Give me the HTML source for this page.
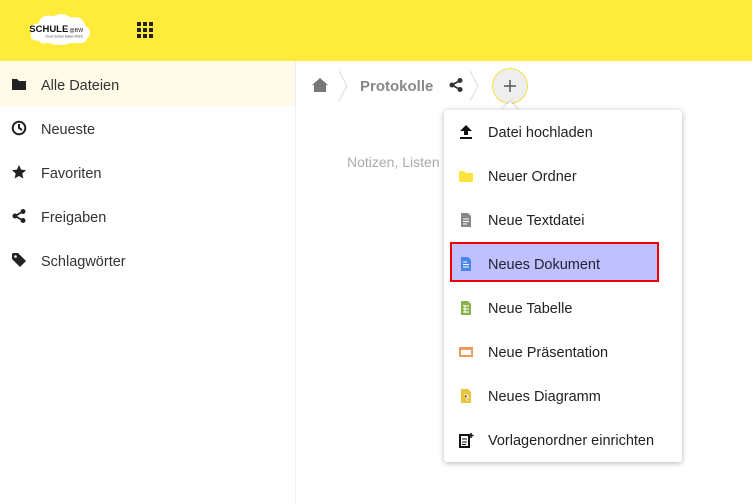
<!DOCTYPE html>
<html><head><style>
*{margin:0;padding:0;box-sizing:border-box}
body{width:752px;height:504px;overflow:hidden;background:#fff;font-family:"Liberation Sans","DejaVu Sans",sans-serif;color:#222;position:relative}
.hdr{position:absolute;left:0;top:0;width:752px;height:61px;background:#ffeb3b}
.side{position:absolute;left:0;top:61px;width:296px;height:443px;border-right:1px solid #eee}
.si{height:44px;display:flex;align-items:center;font-size:14.5px;color:#333;padding-top:3px}
.si svg{margin-left:11px;width:16px;height:16px;margin-right:14px;margin-top:-3px}
.si.act{background:#fffbe8}
.menu{position:absolute;left:444px;top:110px;width:238px;height:352px;background:#fff;border-radius:3px;box-shadow:0 1px 6px rgba(0,0,0,.3)}
.mi{height:44px;font-size:14.5px;color:#222;position:relative}
.mi svg{position:absolute;left:14px;top:14px;width:16px;height:16px}
.mi span{position:absolute;left:44px;top:15px}
.hl{position:absolute;left:6px;top:132px;width:209px;height:40px;background:#c0c0ff;border:2px solid #e00}
</style></head><body>
<div class="hdr">
 <svg style="position:absolute;left:26px;top:9px" width="72" height="38" viewBox="0 0 68 36"><path d="M12 30 Q2 30 5 22 Q2 14 12 14 Q14 4 26 7 Q34 2 42 8 Q54 6 56 16 Q64 20 58 28 Q56 34 44 32 Q30 36 20 32 Q14 34 12 30Z" fill="#fff"/><text x="3" y="22" font-size="9" font-weight="bold" fill="#111" font-family="Liberation Sans">SCHULE</text><text x="41" y="22" font-size="5" fill="#111">@BW</text><text x="18" y="27" font-size="3" fill="#555">Cloud Schule Baden-Württ.</text></svg>
 <svg style="position:absolute;left:137px;top:22px" width="16" height="16"><g fill="#222"><rect x="0" y="0" width="4" height="4"/><rect x="6" y="0" width="4" height="4"/><rect x="12" y="0" width="4" height="4"/><rect x="0" y="6" width="4" height="4"/><rect x="6" y="6" width="4" height="4"/><rect x="12" y="6" width="4" height="4"/><rect x="0" y="12" width="4" height="4"/><rect x="6" y="12" width="4" height="4"/><rect x="12" y="12" width="4" height="4"/></g></svg>
</div>
<div class="side">
 <div class="si act" style="margin-top:1px"><svg viewBox="0 0 16 16"><path d="M1 3h5l2 2h7v9H1z" fill="#222"/></svg>Alle Dateien</div>
 <div class="si"><svg viewBox="0 0 16 16"><circle cx="8" cy="8" r="6.3" fill="none" stroke="#222" stroke-width="2"/><path d="M8 4v4l3 2" fill="none" stroke="#222" stroke-width="2"/></svg>Neueste</div>
 <div class="si"><svg viewBox="0 0 16 16"><path d="M8 1l2.1 4.6 5 .5-3.8 3.4 1.1 5L8 12l-4.4 2.5 1.1-5L.9 6.1l5-.5z" fill="#222"/></svg>Favoriten</div>
 <div class="si"><svg viewBox="0 0 16 16"><circle cx="12" cy="3.5" r="2.5" fill="#222"/><circle cx="12" cy="12.5" r="2.5" fill="#222"/><circle cx="4" cy="8" r="2.5" fill="#222"/><path d="M12 3.5L4 8l8 4.5" stroke="#222" stroke-width="1.8" fill="none"/></svg>Freigaben</div>
 <div class="si"><svg viewBox="0 0 16 16"><path d="M1 2v5l8 8 6-6-8-8H2z" fill="#222"/><circle cx="4.5" cy="4.5" r="1.3" fill="#fff"/></svg>Schlagwörter</div>
</div>
<svg style="position:absolute;left:312px;top:78px" width="16" height="14" viewBox="0 0 16 14"><path d="M8 0L0 7h2v7h12V7h2z" fill="#777"/></svg>
<svg style="position:absolute;left:337px;top:70px" width="12" height="32"><path d="M2 1l8 15-8 15" fill="none" stroke="#ddd"/></svg>
<div style="position:absolute;left:360px;top:78px;font-size:15px;font-weight:bold;color:#888">Protokolle</div>
<svg style="position:absolute;left:448px;top:77px" width="16" height="16" viewBox="0 0 16 16"><circle cx="12" cy="3.5" r="2.5" fill="#333"/><circle cx="12" cy="12.5" r="2.5" fill="#333"/><circle cx="4" cy="8" r="2.5" fill="#333"/><path d="M12 3.5L4 8l8 4.5" stroke="#333" stroke-width="1.8" fill="none"/></svg>
<svg style="position:absolute;left:468px;top:70px" width="12" height="32"><path d="M2 1l8 15-8 15" fill="none" stroke="#ddd"/></svg>
<div style="position:absolute;left:492px;top:68px;width:36px;height:36px;border-radius:50%;background:#eee;border:1px solid #f4e04a"></div>
<svg style="position:absolute;left:503px;top:79px" width="14" height="14"><path d="M7 1v12M1 7h12" stroke="#555" stroke-width="1.5"/></svg>
<div style="position:absolute;left:347px;top:154px;font-size:14px;color:#aaa">Notizen, Listen</div>
<div style="position:absolute;left:504px;top:104px;width:12px;height:12px;background:#fff;transform:rotate(45deg);box-shadow:-1px -1px 2px rgba(0,0,0,.15)"></div>
<div class="menu">
 <div class="hl"></div>
 <div class="mi"><svg viewBox="0 0 16 16"><path d="M8 1L2 7h4v4h4V7h4zM2 13h12v2H2z" fill="#111"/></svg><span>Datei hochladen</span></div>
 <div class="mi"><svg viewBox="0 0 16 16"><path d="M1 3h5l2 2h7v9H1z" fill="#fce33d"/></svg><span>Neuer Ordner</span></div>
 <div class="mi"><svg viewBox="0 0 16 16"><path d="M3 1h7l3 3v11H3z" fill="#888"/><path d="M5 7h6M5 9.5h6M5 12h4" stroke="#fff"/></svg><span>Neue Textdatei</span></div>
 <div class="mi"><svg viewBox="0 0 16 16"><path d="M3 1h7l3 3v11H3z" fill="#4a86e8"/><path d="M5 6h4M5 8.5h6M5 11h6" stroke="#fff"/></svg><span style="color:#223">Neues Dokument</span></div>
 <div class="mi"><svg viewBox="0 0 16 16"><path d="M3 1h7l3 3v11H3z" fill="#8bb34a"/><path d="M5 6h6M5 9h6M5 12h6M7 5v8" stroke="#fff"/></svg><span>Neue Tabelle</span></div>
 <div class="mi"><svg viewBox="0 0 16 16"><rect x="1" y="3" width="14" height="10" fill="#f0995e"/><rect x="3" y="6" width="10" height="5" fill="#fff"/></svg><span>Neue Präsentation</span></div>
 <div class="mi"><svg viewBox="0 0 16 16"><path d="M3 1h7l3 3v11H3z" fill="#e9c53d"/><path d="M6 7h3v5h2M9 9h2" stroke="#fff"/></svg><span>Neues Diagramm</span></div>
 <div class="mi"><svg viewBox="0 0 16 16"><path d="M2 3h9v12H2z" fill="none" stroke="#111" stroke-width="2"/><path d="M4 7h5M4 10h5M4 12.5h4" stroke="#111"/><path d="M13 1v5M10.5 3.5h5" stroke="#111" stroke-width="1.5"/></svg><span>Vorlagenordner einrichten</span></div>
</div>
</body></html>
